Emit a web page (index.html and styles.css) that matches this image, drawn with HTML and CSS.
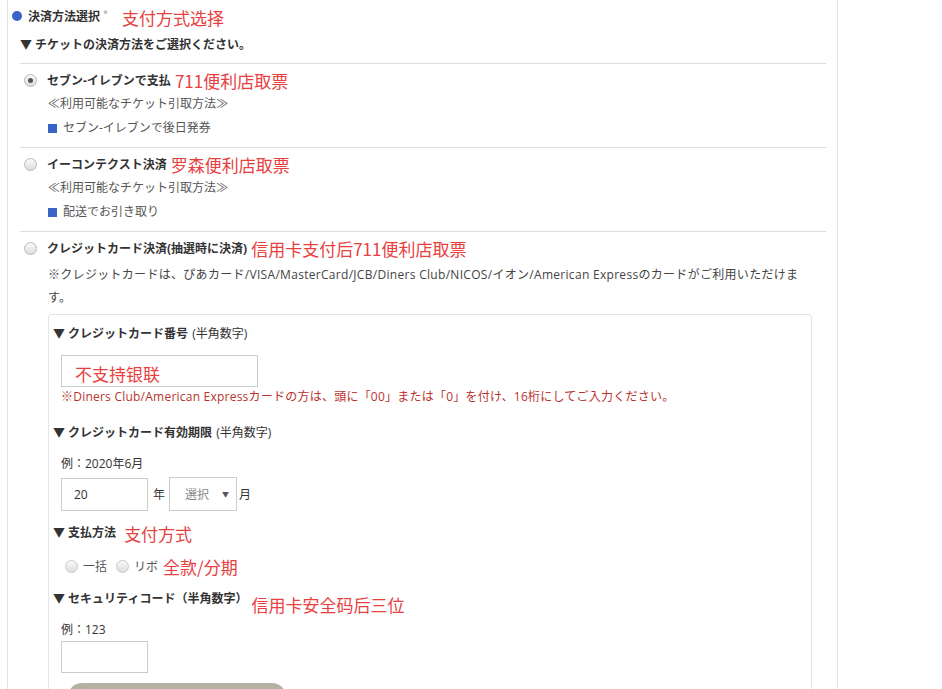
FILE: index.html
```html
<!DOCTYPE html>
<html lang="ja">
<head>
    <meta charset="UTF-8">
    <title>決済方法選択</title>
    <link rel="stylesheet" href="styles.css">
</head>
<body>
<div class="page">
    <div class="heading">
        <span class="dot"></span>
        <span class="heading-text">決済方法選択</span><span class="req">*</span>
        <span class="note">支付方式选择</span>
    </div>
    <div class="lead">▼ チケットの決済方法をご選択ください。</div>

    <div class="option">
        <div class="option-row">
            <span class="radio checked"></span>
            <span class="option-label">セブン-イレブンで支払</span>
            <span class="note">711便利店取票</span>
        </div>
        <div class="sub">≪利用可能なチケット引取方法≫</div>
        <div class="sub"><span class="square"></span>セブン-イレブンで後日発券</div>
    </div>

    <div class="option">
        <div class="option-row">
            <span class="radio"></span>
            <span class="option-label">イーコンテクスト決済</span>
            <span class="note">罗森便利店取票</span>
        </div>
        <div class="sub">≪利用可能なチケット引取方法≫</div>
        <div class="sub"><span class="square"></span>配送でお引き取り</div>
    </div>

    <div class="option last">
        <div class="option-row">
            <span class="radio"></span>
            <span class="option-label">クレジットカード決済(抽選時に決済)</span>
            <span class="note">信用卡支付后711便利店取票</span>
        </div>
        <div class="card-note">※クレジットカードは、ぴあカード/VISA/MasterCard/JCB/Diners Club/NICOS/イオン/American Expressのカードがご利用いただけます。</div>

        <div class="card">
            <div class="field-title">▼ クレジットカード番号 <span class="light">(半角数字)</span></div>
            <div class="input wide"><span class="note">不支持银联</span></div>
            <div class="error">※Diners Club/American Expressカードの方は、頭に「00」または「0」を付け、16桁にしてご入力ください。</div>

            <div class="field-title gap">▼ クレジットカード有効期限 <span class="light">(半角数字)</span></div>
            <div class="example">例：2020年6月</div>
            <div class="expiry">
                <div class="input short">20</div>
                <span class="unit">年</span>
                <div class="select"><span>選択</span><span class="arrow">▼</span></div>
                <span class="unit-m">月</span>
            </div>

            <div class="field-title gap-s">▼ 支払方法 <span class="note wide-gap">支付方式</span></div>
            <div class="pay-row">
                <span class="radio small"></span><span class="pay-label">一括</span>
                <span class="radio small"></span><span class="pay-label">リボ</span>
                <span class="note">全款/分期</span>
            </div>

            <div class="field-title gap-m">▼ セキュリティコード（半角数字） <span class="note push">信用卡安全码后三位</span></div>
            <div class="example">例：123</div>
            <div class="input short tall"></div>
            <div class="button"></div>
        </div>
    </div>
</div>
</body>
</html>
```

FILE: styles.css
```css
body {
    margin: 0;
    background: #fff;
    font-family: "Open Sans", "Noto Sans CJK JP", sans-serif;
    font-size: 12px;
    color: #333;
    overflow: hidden;
}
.page {
    margin-left: 7px;
    width: 806px;
    height: 689px;
    box-sizing: content-box;
    overflow: hidden;
    padding: 0 11px 0 12px;
    border-left: 1px solid #e3e3e3;
    border-right: 1px solid #e3e3e3;
}
.heading {
    display: flex; align-items: center;
    height: 32px;
    margin-left: -8px;
}
.dot {
    width: 10px; height: 10px; border-radius: 50%;
    background: #3a63c8; margin-right: 6px;
}
.heading-text { font-weight: bold; }
.req { color: #999; font-size: 9px; align-self: flex-start; margin: 7px 0 0 3px; }
.heading .note { margin-left: 14px; margin-top: 3px; }
.note {
    font-family: "Noto Sans CJK SC", sans-serif;
    color: #e8403f; font-size: 17px; font-weight: normal;
    line-height: 20px; letter-spacing: 0;
}
.lead {
    font-weight: bold; height: 26px; line-height: 26px;
    border-bottom: 1px solid #ddd;
    padding-bottom: 5px;
}
.option {
    padding: 4px 0 7px;
    border-bottom: 1px solid #ddd;
}
.option.last { border-bottom: none; }
.option-row {
    display: flex; align-items: center;
    height: 24px; padding-left: 4px;
}
.option-label { font-weight: bold; margin-left: 10px; }
.option-row .note { margin-left: 4px; margin-top: 2px; }
.radio {
    width: 13px; height: 13px; border-radius: 50%;
    border: 1px solid #b8b8b8;
    background: linear-gradient(#fafafa, #dcdcdc);
    box-sizing: border-box; display: inline-flex;
    align-items: center; justify-content: center;
}
.radio.checked::after {
    content: ""; width: 5px; height: 5px; border-radius: 50%; background: #555;
}
.sub {
    height: 24px; line-height: 24px; padding-left: 28px;
    color: #555;
    display: flex; align-items: center;
}
.square {
    width: 9px; height: 9px; background: #3a63c8; margin-right: 6px;
}
.card-note {
    line-height: 23px; padding-left: 28px; margin-top: 3px;
    color: #444; padding-right: 22px;
    letter-spacing: 0.3px;
}
.card {
    margin: 5px 14px 0 28px;
    border: 1px solid #e5e5e5; border-radius: 3px;
    padding: 9px 4px 0;
    height: 400px;
}
.field-title {
    font-weight: bold; line-height: 20px;
    display: flex; align-items: center;
}
.field-title .light { font-weight: normal; margin-left: 4px; }
.field-title .note { margin-left: 5px; margin-top: 2px; }
.field-title .wide-gap { margin-left: 8px; }
.field-title .push { margin: 0 0 0 4px; transform: translateY(6px); }
.gap { margin-top: 16px; }
.gap-s { margin-top: 11px; }
.gap-m { margin-top: 13px; }
.input {
    border: 1px solid #ccc; box-sizing: border-box;
    margin-left: 8px; background: #fff;
}
.input.wide {
    width: 197px; height: 32px; margin-top: 11px;
    padding: 8px 0 0 13px;
}
.input.short {
    width: 87px; height: 33px;
    padding-left: 12px; line-height: 31px;
}
.input.tall { height: 32px; margin-top: 1px; }
.error { color: #b8322d; line-height: 20px; margin-left: 8px; letter-spacing: 0.23px; }
.example { line-height: 20px; margin: 11px 0 0 8px; }
.expiry { display: flex; align-items: center; margin-top: 3px; }
.unit { margin-left: 5px; }
.select {
    width: 68px; height: 34px; box-sizing: border-box;
    border: 1px solid #ccc; margin-left: 4px;
    display: flex; align-items: center;
    padding: 0 7px 0 15px; color: #888; justify-content: space-between;
}
.select .arrow { font-size: 7px; color: #555; }
.unit-m { margin-left: 2px; }
.pay-row {
    display: flex; align-items: center;
    margin: 12px 0 0 12px; height: 20px;
}
.radio.small { width: 13px; height: 13px; border-color: #c8c8c8; }
.pay-label { margin: 0 9px 0 5px; color: #555; }
.pay-row .note { margin-left: -4px; margin-top: 2px; }
.button {
    width: 218px; height: 40px; border-radius: 14px;
    background: #b4b0a3; margin: 10px 0 0 15px;
}
```
